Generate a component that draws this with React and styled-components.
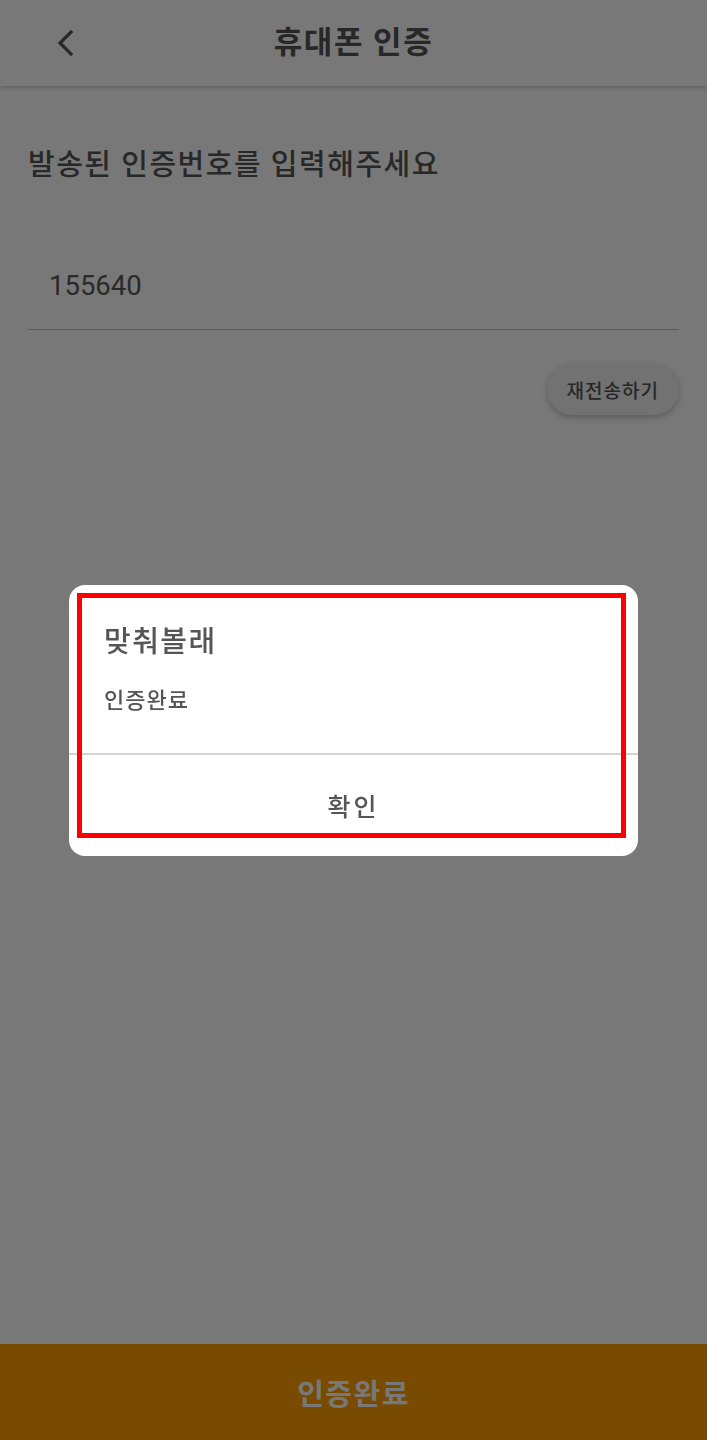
import styled, { createGlobalStyle } from "styled-components";

const GlobalStyle = createGlobalStyle`
  * { box-sizing: border-box; }
  html, body { margin: 0; padding: 0; background: #fff; }
  body {
    font-family: Roboto, "Noto Sans CJK KR", "Noto Sans", sans-serif;
    color: #555;
  }
`;

function BackIcon() {
  return (
    <svg width="18" height="28" viewBox="0 0 18 28" fill="none">
      <path
        d="M14 3 L3 14 L14 25"
        stroke="#555"
        strokeWidth="3.2"
        strokeLinecap="square"
        strokeLinejoin="miter"
      />
    </svg>
  );
}

function App() {
  return (
    <>
      <GlobalStyle />
      <Page>
        <Header>
          <BackButton aria-label="뒤로">
            <BackIcon />
          </BackButton>
          <Title>휴대폰 인증</Title>
          <span />
        </Header>
        <Content>
          <Heading>발송된 인증번호를 입력해주세요</Heading>
          <CodeField>155640</CodeField>
          <ResendRow>
            <ResendButton>재전송하기</ResendButton>
          </ResendRow>
        </Content>
        <SubmitBar>인증완료</SubmitBar>
      </Page>

      <Dim>
        <Dialog>
          <Highlight />
          <DialogBody>
            <DialogTitle>맞춰볼래</DialogTitle>
            <DialogMessage>인증완료</DialogMessage>
          </DialogBody>
          <DialogButton>확인</DialogButton>
        </Dialog>
      </Dim>
    </>
  );
}

const Page = styled.div`
  min-height: 100vh;
  display: flex;
  flex-direction: column;
  background: #fff;
`;

const Header = styled.header`
  height: 86px;
  display: grid;
  grid-template-columns: 120px 1fr 120px;
  align-items: center;
  background: #fff;
  box-shadow: 0 2px 4px rgba(0, 0, 0, 0.18);
`;

const BackButton = styled.button`
  border: 0;
  background: none;
  padding: 0 0 0 57px;
  display: flex;
  align-items: center;
  height: 100%;
`;

const Title = styled.h1`
  margin: 0;
  text-align: center;
  font-size: 31px;
  letter-spacing: 1.5px;
  font-weight: 700;
  color: #555;
  line-height: 36px;
`;

const Content = styled.main`
  flex: 1;
  padding: 0 28px;
`;

const Heading = styled.h2`
  margin: 61px 0 0;
  font-size: 29px;
  letter-spacing: 1.5px;
  line-height: 36px;
  font-weight: 500;
  color: #555;
`;

const CodeField = styled.div`
  margin-top: 71px;
  padding: 16px 21px 27px;
  font-size: 27.5px;
  line-height: 32px;
  color: #5a5a5a;
  border-bottom: 1.5px solid #c4c4c4;
`;

const ResendRow = styled.div`
  display: flex;
  justify-content: flex-end;
  margin-top: 33px;
`;

const ResendButton = styled.button`
  height: 52px;
  padding: 0 20px;
  border: 0;
  border-radius: 26px;
  background: #f2f2f2;
  box-shadow: 0 3px 6px rgba(0, 0, 0, 0.22);
  font-family: inherit;
  font-size: 19px;
  letter-spacing: 1px;
  font-weight: 500;
  color: #555;
`;

const SubmitBar = styled.button`
  height: 96px;
  border: 0;
  background: #ffa000;
  color: #fff;
  font-family: inherit;
  font-size: 29px;
  letter-spacing: 1.5px;
  font-weight: 700;
`;

const Dim = styled.div`
  position: fixed;
  inset: 0;
  background: rgba(0, 0, 0, 0.53);
  display: flex;
  align-items: center;
  justify-content: center;
`;

const Dialog = styled.div`
  position: relative;
  width: 569px;
  background: #fff;
  border-radius: 16px;
  overflow: hidden;
`;

const Highlight = styled.div`
  position: absolute;
  left: 8px;
  top: 8px;
  right: 12px;
  bottom: 18px;
  border: 5px solid #ff0000;
  pointer-events: none;
`;

const DialogBody = styled.div`
  padding: 40px 35px 39px;
  display: flex;
  flex-direction: column;
  gap: 29px;
  border-bottom: 2px solid #d4d4d4;
`;

const DialogTitle = styled.div`
  font-size: 29px;
  letter-spacing: 1.5px;
  line-height: 34px;
  font-weight: 500;
  color: #555;
`;

const DialogMessage = styled.div`
  font-size: 22px;
  letter-spacing: 1px;
  line-height: 26px;
  font-weight: 500;
  color: #555;
`;

const DialogButton = styled.button`
  display: block;
  width: 100%;
  height: 101px;
  border: 0;
  background: none;
  font-family: inherit;
  font-size: 25px;
  letter-spacing: 3px;
  font-weight: 500;
  color: #555;
`;

export default App;
